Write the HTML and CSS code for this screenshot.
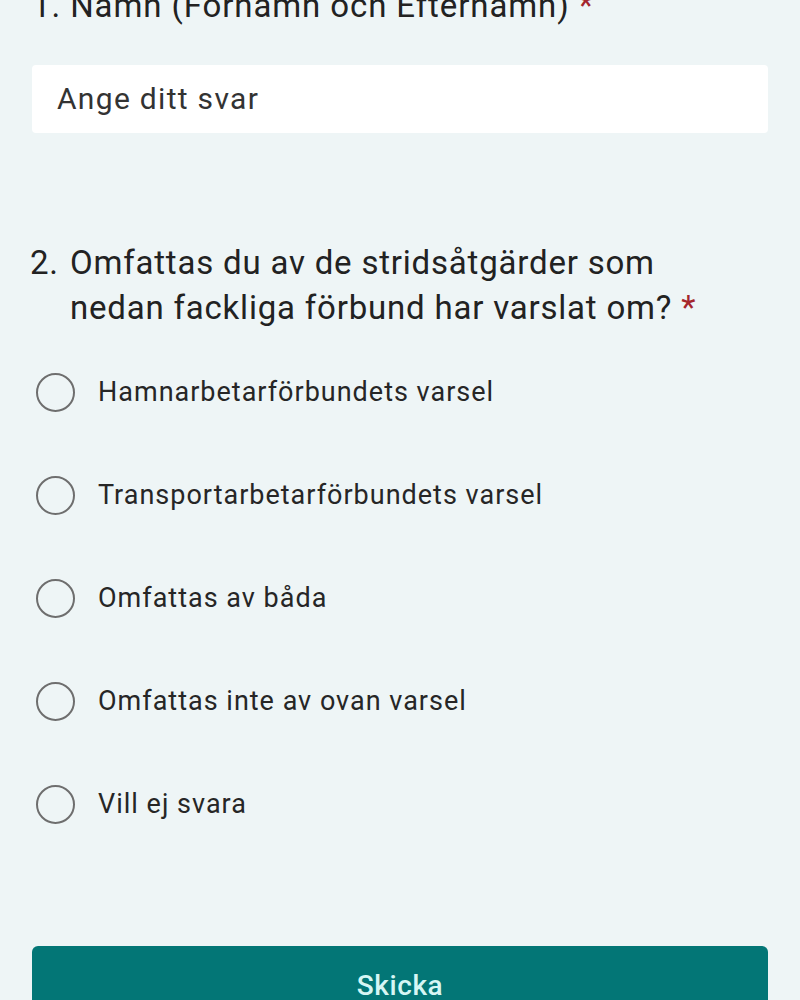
FILE: index.html
```html
<!DOCTYPE html>
<html lang="sv">
<head>
<meta charset="utf-8">
<link rel="stylesheet" href="styles.css">
</head>
<body>
<div class="page">
  <div class="q1-title"><span class="num">1.</span> Namn (Förnamn och Efternamn) <span class="req">*</span></div>
  <div class="input">Ange ditt svar</div>

  <div class="q2-title">
    <span class="num">2.</span>
    <span class="qtext">Omfattas du av de stridsåtgärder som nedan fackliga förbund har varslat om? <span class="req">*</span></span>
  </div>

  <div class="options">
    <div class="opt"><span class="radio"></span><span class="label">Hamnarbetarförbundets varsel</span></div>
    <div class="opt"><span class="radio"></span><span class="label">Transportarbetarförbundets varsel</span></div>
    <div class="opt"><span class="radio"></span><span class="label">Omfattas av båda</span></div>
    <div class="opt"><span class="radio"></span><span class="label">Omfattas inte av ovan varsel</span></div>
    <div class="opt"><span class="radio"></span><span class="label">Vill ej svara</span></div>
  </div>

  <div class="btn">Skicka</div>
</div>
</body>
</html>
```
FILE: styles.css
```css
html, body {
  margin: 0;
  padding: 0;
  background: #eef5f6;
}
body {
  font-family: Roboto, "Liberation Sans", sans-serif;
  color: #222;
  height: 1000px;
  overflow: hidden;
}
.page {
  padding: 0 32px;
  margin-top: -16px;
}
.q1-title {
  font-size: 33px;
  line-height: 44px;
  letter-spacing: 0.9px;
}
.req {
  color: #a4262c;
}
.input {
  margin-top: 37px;
  height: 68px;
  background: #ffffff;
  border-radius: 4px;
  box-sizing: border-box;
  padding-left: 25px;
  font-size: 30px;
  line-height: 68px;
  color: #333;
  letter-spacing: 1.3px;
}
.q2-title {
  margin-top: 107px;
  display: flex;
  font-size: 33px;
  line-height: 45px;
  margin-left: -2px;
  letter-spacing: 0.8px;
}
.q2-title .num {
  width: 40px;
  flex: none;
}
.q2-title .qtext {
  width: 640px;
}
.options {
  margin-top: 42px;
  display: flex;
  flex-direction: column;
  gap: 63px;
}
.opt {
  display: flex;
  align-items: center;
  height: 40px;
}
.radio {
  width: 35px;
  height: 35px;
  border: 2.5px solid #6e6e6e;
  border-radius: 50%;
  margin-left: 4px;
  flex: none;
}
.label {
  margin-left: 23px;
  font-size: 27px;
  color: #262626;
  letter-spacing: 1px;
}
.btn {
  margin-top: 122px;
  height: 80px;
  background: #037676;
  border-radius: 6px;
  color: #d6f6f4;
  font-size: 28px;
  font-weight: 500;
  text-align: center;
  line-height: 80px;
  letter-spacing: 0.6px;
}
```
